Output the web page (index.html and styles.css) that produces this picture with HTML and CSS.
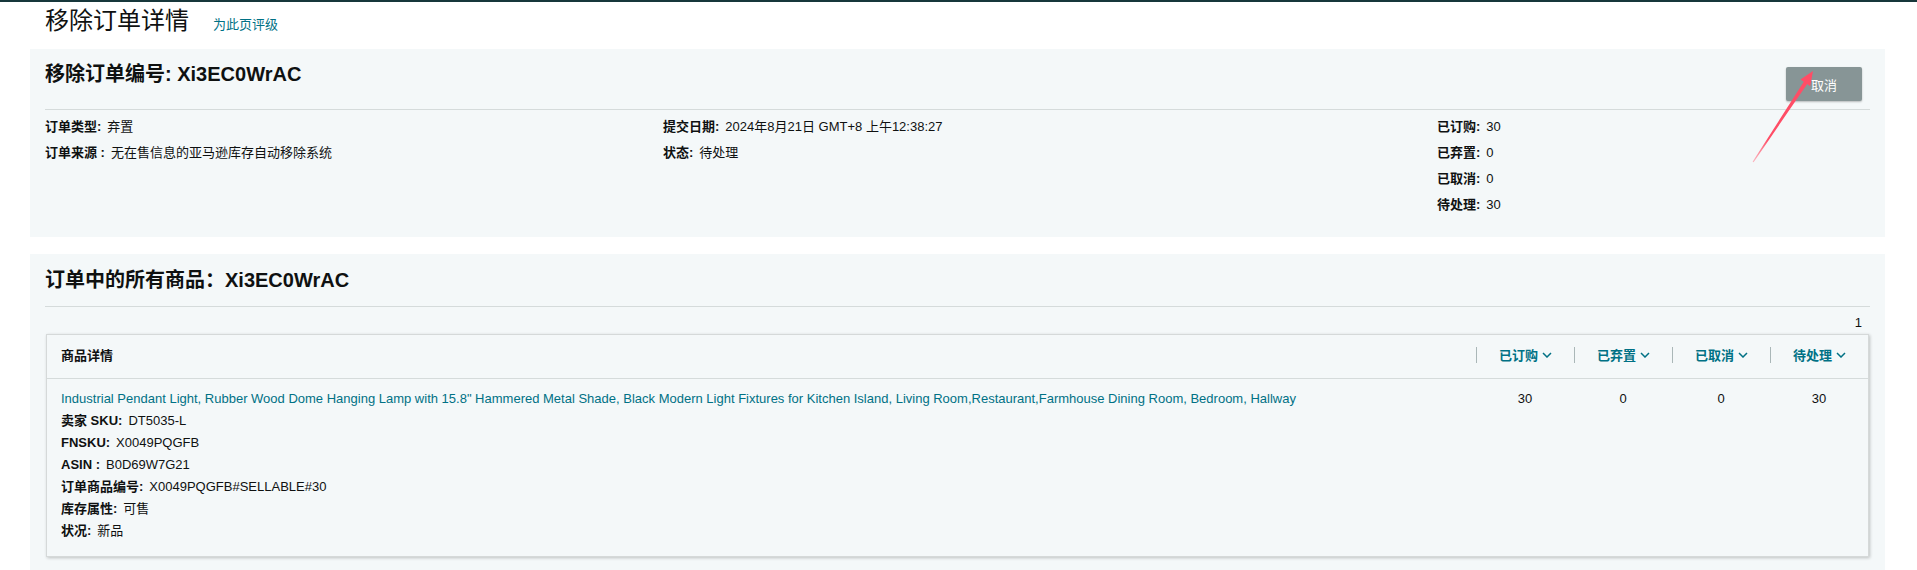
FILE: index.html
```html
<!DOCTYPE html>
<html lang="zh-CN">
<head>
<meta charset="utf-8">
<title>移除订单详情</title>
<link rel="stylesheet" href="styles.css">
</head>
<body>
<div class="page">
  <header class="page-head">
    <h1 class="page-title">移除订单详情</h1>
    <a class="rate-link" href="#">为此页评级</a>
  </header>

  <section class="panel panel-order">
    <div class="panel-top">
      <h2 class="panel-heading">移除订单编号: Xi3EC0WrAC</h2>
      <button class="btn-cancel" type="button">取消</button>
    </div>
    <div class="divider"></div>
    <div class="info-grid">
      <div class="info-col">
        <div class="info-row"><span class="lbl">订单类型:</span><span class="val">弃置</span></div>
        <div class="info-row"><span class="lbl">订单来源 :</span><span class="val">无在售信息的亚马逊库存自动移除系统</span></div>
      </div>
      <div class="info-col">
        <div class="info-row"><span class="lbl">提交日期:</span><span class="val">2024年8月21日 GMT+8 上午12:38:27</span></div>
        <div class="info-row"><span class="lbl">状态:</span><span class="val">待处理</span></div>
      </div>
      <div class="info-col">
        <div class="info-row"><span class="lbl">已订购:</span><span class="val">30</span></div>
        <div class="info-row"><span class="lbl">已弃置:</span><span class="val">0</span></div>
        <div class="info-row"><span class="lbl">已取消:</span><span class="val">0</span></div>
        <div class="info-row"><span class="lbl">待处理:</span><span class="val">30</span></div>
      </div>
    </div>
  </section>

  <section class="panel panel-items">
    <h2 class="panel-heading">订单中的所有商品：Xi3EC0WrAC</h2>
    <div class="divider divider-items"></div>
    <div class="pager">1</div>
    <div class="items-table">
      <div class="t-head">
        <div class="th th-main">商品详情</div>
        <div class="th th-num"><span class="sep"></span><span class="th-label">已订购<svg class="chev" viewBox="0 0 10 6" width="10" height="6"><polyline points="1,1 5,5 9,1"/></svg></span></div>
        <div class="th th-num"><span class="sep"></span><span class="th-label">已弃置<svg class="chev" viewBox="0 0 10 6" width="10" height="6"><polyline points="1,1 5,5 9,1"/></svg></span></div>
        <div class="th th-num"><span class="sep"></span><span class="th-label">已取消<svg class="chev" viewBox="0 0 10 6" width="10" height="6"><polyline points="1,1 5,5 9,1"/></svg></span></div>
        <div class="th th-num"><span class="sep"></span><span class="th-label">待处理<svg class="chev" viewBox="0 0 10 6" width="10" height="6"><polyline points="1,1 5,5 9,1"/></svg></span></div>
      </div>
      <div class="t-row">
        <div class="td td-main">
          <a class="prod-title" href="#">Industrial Pendant Light, Rubber Wood Dome Hanging Lamp with 15.8" Hammered Metal Shade, Black Modern Light Fixtures for Kitchen Island, Living Room,Restaurant,Farmhouse Dining Room, Bedroom, Hallway</a>
          <div class="prod-line"><span class="lbl">卖家 SKU:</span><span class="val">DT5035-L</span></div>
          <div class="prod-line"><span class="lbl">FNSKU:</span><span class="val">X0049PQGFB</span></div>
          <div class="prod-line"><span class="lbl">ASIN :</span><span class="val">B0D69W7G21</span></div>
          <div class="prod-line"><span class="lbl">订单商品编号:</span><span class="val">X0049PQGFB#SELLABLE#30</span></div>
          <div class="prod-line"><span class="lbl">库存属性:</span><span class="val">可售</span></div>
          <div class="prod-line"><span class="lbl">状况:</span><span class="val">新品</span></div>
        </div>
        <div class="td td-num">30</div>
        <div class="td td-num">0</div>
        <div class="td td-num">0</div>
        <div class="td td-num">30</div>
      </div>
    </div>
  </section>
</div>

<svg class="annot" viewBox="0 0 1917 570" width="1917" height="570" aria-hidden="true">
  <defs>
    <linearGradient id="arrowGrad" x1="1753" y1="160" x2="1813" y2="69" gradientUnits="userSpaceOnUse">
      <stop offset="0" stop-color="#ff8a9a" stop-opacity="0.6"/>
      <stop offset="0.25" stop-color="#ff4d66"/>
      <stop offset="1" stop-color="#ff4d66"/>
    </linearGradient>
  </defs>
  <polygon fill="url(#arrowGrad)" points="1753,160 1753.6,160.3 1807.2,81.9 1810.2,84.2 1813,69 1800.4,77.6 1803.8,79.7 1752.6,159.7"/>
</svg>
</body>
</html>
```

FILE: styles.css
```css
* {
  box-sizing: border-box;
}

html, body {
  margin: 0;
  padding: 0;
}

body {
  position: relative;
  width: 1917px;
  height: 570px;
  overflow: hidden;
  background: #ffffff;
  color: #0f1111;
  font-family: "Liberation Sans", Arial, "Noto Sans CJK SC", sans-serif;
  font-size: 13px;
  border-top: 2px solid #17373b;
}

.page {
  padding: 0 32px 0 30px;
}

.page-head {
  display: flex;
  align-items: baseline;
  gap: 24px;
  padding: 5px 0 0 15px;
  height: 47px;
}

.page-title {
  margin: 0;
  font-size: 24px;
  line-height: 28px;
  font-weight: normal;
  color: #0f1111;
}

.rate-link {
  color: #007185;
  text-decoration: none;
  font-size: 13px;
}

.panel {
  background: #f4f8f9;
  padding: 12px 15px 19px 15px;
}

.panel-top {
  display: flex;
  justify-content: space-between;
  align-items: flex-start;
}

.panel-heading {
  margin: 0;
  font-size: 20px;
  line-height: 26px;
  font-weight: bold;
  color: #0f1111;
}

.btn-cancel {
  margin: 6px 8px 0 0;
  width: 76px;
  height: 34px;
  border: none;
  border-radius: 2px;
  background: #879596;
  color: #ffffff;
  font-family: inherit;
  font-size: 13px;
  box-shadow: 0 1px 2px rgba(0, 0, 0, 0.25);
  padding: 0;
}

.divider {
  height: 1px;
  background: #d5dbdb;
  margin-top: 8px;
}

.info-grid {
  display: grid;
  grid-template-columns: 618px 774px 1fr;
  margin-top: 4px;
}

.info-row {
  line-height: 26px;
  height: 26px;
  white-space: nowrap;
}

.lbl {
  font-weight: bold;
}

.val {
  margin-left: 6px;
}

.panel-items {
  margin-top: 17px;
  padding-top: 13px;
  padding-bottom: 20px;
}

.divider-items {
  margin-top: 13px;
}

.pager {
  text-align: right;
  line-height: 16px;
  margin: 8px 8px 3px 0;
}

.items-table {
  margin: 0 1px;
  border: 1px solid #d5d9d9;
  background: #f4f8f9;
  box-shadow: 1px 1px 3px rgba(0, 0, 0, 0.22);
}

.t-head,
.t-row {
  display: grid;
  grid-template-columns: 1fr repeat(4, 98px);
}

.t-head {
  border-bottom: 1px solid #d5dbdb;
  height: 44px;
}

.th {
  display: flex;
  align-items: center;
  padding-bottom: 4px;
}

.th-main {
  padding-left: 14px;
  font-weight: bold;
}

.sep {
  width: 1px;
  height: 16px;
  background: #aab7b8;
}

.th-label {
  flex: 1;
  display: flex;
  justify-content: center;
  align-items: center;
  gap: 4px;
  color: #007185;
  font-weight: bold;
}

.chev {
  fill: none;
  stroke: #007185;
  stroke-width: 1.5;
}

.t-row {
  padding: 9px 0 14px 0;
}

.td {
  line-height: 22px;
}

.td-main {
  padding-left: 14px;
}

.prod-title {
  display: block;
  color: #007185;
  text-decoration: none;
  white-space: nowrap;
}

.td-num {
  text-align: center;
}

.annot {
  position: absolute;
  left: 0;
  top: 0;
  pointer-events: none;
}
```
